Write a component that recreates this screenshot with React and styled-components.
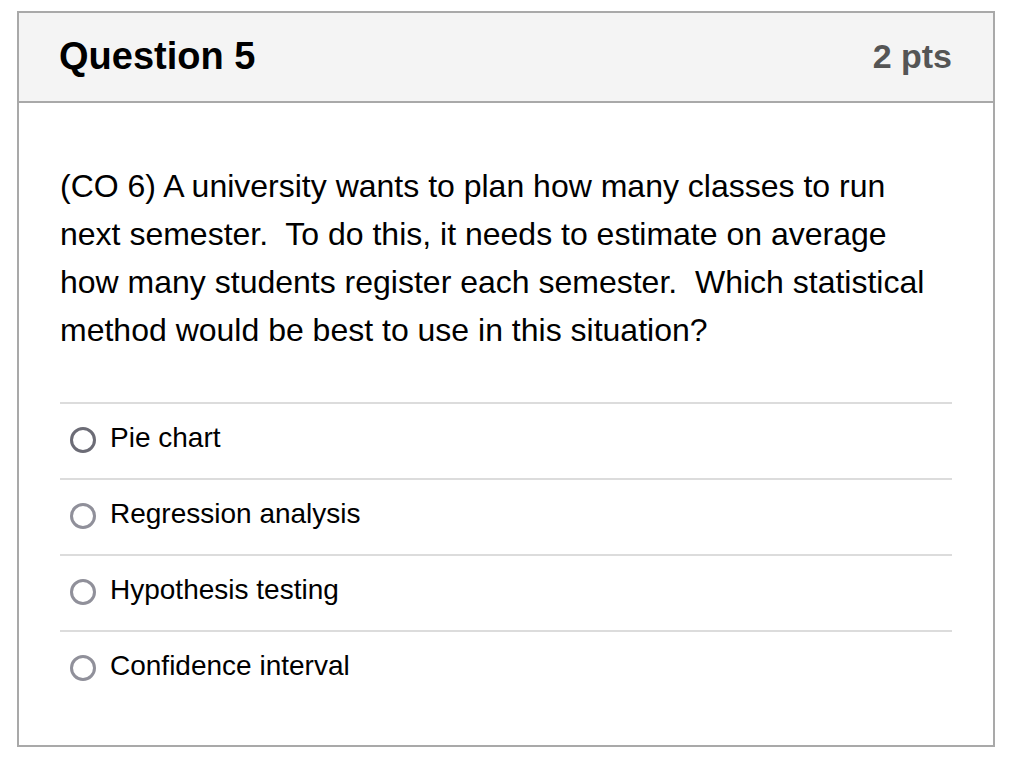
import React from "react";
import styled, { createGlobalStyle } from "styled-components";

const Global = createGlobalStyle`
  html, body { margin: 0; padding: 0; background: #fff; }
  body { font-family: "Liberation Sans", Arial, sans-serif; color: #000; }
`;

const Page = styled.div`
  padding: 11px 21px 0 17px;
`;

const Card = styled.div`
  border: 2px solid #a9a9a9;
  background: #fff;
`;

const Header = styled.div`
  display: flex;
  align-items: center;
  justify-content: space-between;
  height: 88px;
  padding: 0 41px 0 40px;
  background: #f4f4f4;
  border-bottom: 2px solid #a9a9a9;
`;

const Title = styled.h2`
  margin: 0;
  font-size: 38px;
  font-weight: 700;
  line-height: 1.15;
  color: #000;
`;

const Points = styled.span`
  font-size: 34px;
  font-weight: 700;
  line-height: 1.15;
  color: #555;
`;

const Body = styled.div`
  padding: 59px 41px 39px 41px;
`;

const Prompt = styled.p`
  margin: 0 0 48px;
  font-size: 32px;
  line-height: 48px;
  white-space: pre-wrap;
`;

const Options = styled.div`
  display: flex;
  flex-direction: column;
`;

const Option = styled.label`
  display: flex;
  align-items: center;
  height: 74px;
  border-top: 2px solid #dcdcdc;
  padding-left: 10px;
  font-size: 28px;
  cursor: pointer;
`;

const OptionText = styled.span`
  margin-bottom: 6px;
`;

const Radio = styled.span`
  box-sizing: border-box;
  width: 26px;
  height: 26px;
  border-radius: 50%;
  border: 3px solid ${(p) => (p.$dark ? "#6c6c76" : "#90909a")};
  margin: 0 14px 3px 0;
  flex-shrink: 0;
`;

const options = ["Pie chart", "Regression analysis", "Hypothesis testing", "Confidence interval"];

export default function App() {
  return (
    <Page>
      <Global />
      <Card>
        <Header>
          <Title>Question 5</Title>
          <Points>2 pts</Points>
        </Header>
        <Body>
          <Prompt>
            {"(CO 6) A university wants to plan how many classes to run next semester.  To do this, it needs to estimate on average how many students register each semester.  Which statistical method would be best to use in this situation?"}
          </Prompt>
          <Options>
            {options.map((o, i) => (
              <Option key={o}>
                <Radio $dark={i === 0} />
                <OptionText>{o}</OptionText>
              </Option>
            ))}
          </Options>
        </Body>
      </Card>
    </Page>
  );
}
